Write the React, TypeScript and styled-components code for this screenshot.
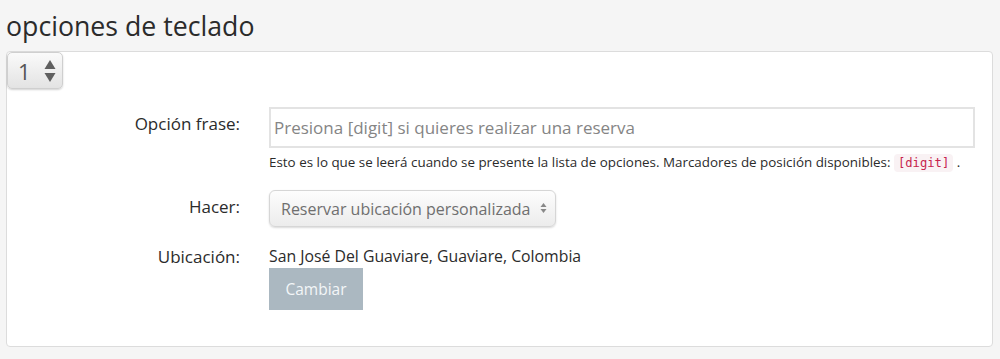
import styled, { createGlobalStyle } from "styled-components";

const GlobalStyle = createGlobalStyle`
  html, body {
    margin: 0;
    padding: 0;
    background: #f5f5f5;
    font-family: "Open Sans", "Liberation Sans", sans-serif;
    color: #2b2b2b;
  }
  * {
    box-sizing: border-box;
  }
`;

export default function App() {
  return (
    <>
      <GlobalStyle />
      <Page>
        <Title>opciones de teclado</Title>
        <Card>
          <DigitWrap>
            <DigitSelect defaultValue="1">
              <option value="1">1</option>
              <option value="2">2</option>
            </DigitSelect>
            <Arrows width="12" height="24" viewBox="0 0 12 24">
              <path d="M6 1 L11.5 10 L0.5 10 Z" fill="#5f5f5f" />
              <path d="M6 23 L11.5 14 L0.5 14 Z" fill="#5f5f5f" />
            </Arrows>
          </DigitWrap>

          <Form>
            <Row>
              <Label>Opción frase:</Label>
              <Field>
                <TextInput placeholder="Presiona [digit] si quieres realizar una reserva" />
                <Help>
                  Esto es lo que se leerá cuando se presente la lista de opciones. Marcadores de
                  posición disponibles: <Code>[digit]</Code> .
                </Help>
              </Field>
            </Row>

            <Row $top={17}>
              <Label $pad={5}>Hacer:</Label>
              <Field>
                <SelectWrap>
                  <ActionSelect defaultValue="custom">
                    <option value="custom">Reservar ubicación personalizada</option>
                  </ActionSelect>
                  <SmallArrows width="7" height="12" viewBox="0 0 7 12">
                    <path d="M3.5 1 L6.5 5 L0.5 5 Z" fill="#888" />
                    <path d="M3.5 11 L6.5 7 L0.5 7 Z" fill="#888" />
                  </SmallArrows>
                </SelectWrap>
              </Field>
            </Row>

            <Row $top={16}>
              <Label $pad={2}>Ubicación:</Label>
              <Field>
                <Value>San José Del Guaviare, Guaviare, Colombia</Value>
                <ChangeButton type="button">Cambiar</ChangeButton>
              </Field>
            </Row>
          </Form>
        </Card>
      </Page>
    </>
  );
}

const Page = styled.div`
  padding: 0 7px 0 6px;
`;

const Title = styled.h1`
  margin: 0;
  padding-top: 11px;
  height: 51px;
  font-size: 26.7px;
  line-height: 29px;
  font-weight: 400;
  color: #2b2b2b;
`;

const Card = styled.div`
  position: relative;
  height: 296px;
  background: #fff;
  border: 1px solid #dcdcdc;
  border-radius: 4px;
`;

const DigitWrap = styled.div`
  position: relative;
  width: 56px;
  height: 37px;
`;

const DigitSelect = styled.select`
  appearance: none;
  width: 100%;
  height: 100%;
  padding: 0 0 0 10px;
  font-family: "Open Sans", "Liberation Sans", sans-serif;
  font-size: 22px;
  color: #555;
  border: 1px solid #cfcfcf;
  border-radius: 5px;
  background: linear-gradient(#fafafa, #e3e3e3);
  box-shadow: 0 1px 2px rgba(0, 0, 0, 0.18);
  outline: none;
`;

const Arrows = styled.svg`
  position: absolute;
  left: 37px;
  top: 7px;
  pointer-events: none;
`;

const Form = styled.div`
  padding-top: 18px;
`;

const Row = styled.div<{ $top?: number }>`
  display: grid;
  grid-template-columns: 248px 720px;
  margin-top: ${(p) => p.$top ?? 0}px;
`;

const Label = styled.div<{ $pad?: number }>`
  text-align: right;
  padding-right: 15px;
  padding-top: ${(p) => p.$pad ?? 5}px;
  font-size: 17px;
  line-height: 23px;
  color: #2b2b2b;
`;

const Field = styled.div`
  padding-left: 14px;
  padding-right: 18px;
`;

const TextInput = styled.input`
  display: block;
  width: 706px;
  height: 41px;
  padding: 0 3px;
  font-family: "Open Sans", "Liberation Sans", sans-serif;
  font-size: 17px;
  color: #333;
  border: 2px solid #e3e3e3;
  border-radius: 0;
  outline: none;
  &::placeholder {
    color: #858585;
  }
`;

const Help = styled.div`
  margin-top: 4px;
  font-size: 13.4px;
  line-height: 20px;
  color: #2b2b2b;
  white-space: nowrap;
`;

const Code = styled.code`
  font-family: "DejaVu Sans Mono", "Liberation Mono", monospace;
  font-size: 12.2px;
  color: #c7254e;
  background: #f9f2f4;
  border-radius: 4px;
  padding: 2px 4px;
`;

const SelectWrap = styled.div`
  position: relative;
  width: 287px;
  height: 37px;
`;

const ActionSelect = styled.select`
  appearance: none;
  width: 100%;
  height: 100%;
  padding: 0 0 0 11px;
  font-family: "Open Sans", "Liberation Sans", sans-serif;
  font-size: 16px;
  color: #6f6f6f;
  border: 1px solid #d6d6d6;
  border-radius: 6px;
  background: linear-gradient(#fdfdfd, #ececec);
  box-shadow: 0 1px 2px rgba(0, 0, 0, 0.15);
  outline: none;
`;

const SmallArrows = styled.svg`
  position: absolute;
  right: 9px;
  top: 12px;
  pointer-events: none;
`;

const Value = styled.div`
  font-size: 15.8px;
  line-height: 22px;
  padding-top: 2px;
  color: #2b2b2b;
`;

const ChangeButton = styled.button`
  display: block;
  width: 94px;
  height: 42px;
  margin-top: 1px;
  font-family: "Open Sans", "Liberation Sans", sans-serif;
  font-size: 15.5px;
  color: #f3f6f8;
  background: #abb8c1;
  border: none;
  border-radius: 0;
`;
